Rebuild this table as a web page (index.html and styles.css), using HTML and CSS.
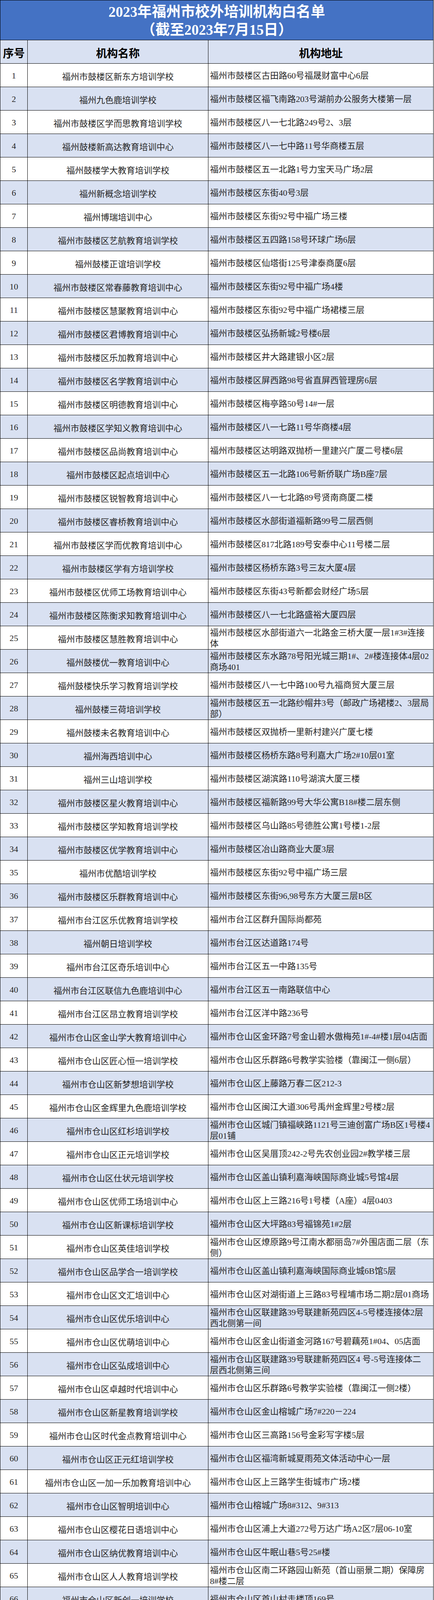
FILE: index.html
```html
<!DOCTYPE html>
<html lang="zh-CN">
<head>
<meta charset="utf-8">
<title>2023年福州市校外培训机构白名单</title>
<link rel="stylesheet" href="styles.css">
</head>
<body>
<div class="sheet">
  <div class="title">
    <div>2023年福州市校外培训机构白名单</div>
    <div>（截至2023年7月15日）</div>
  </div>
  <div class="row head"><div class="num">序号</div><div class="name">机构名称</div><div class="addr">机构地址</div></div>
  <div class="row"><div class="num">1</div><div class="name">福州市鼓楼区新东方培训学校</div><div class="addr">福州市鼓楼区古田路60号福晟财富中心6层</div></div>
  <div class="row alt"><div class="num">2</div><div class="name">福州九色鹿培训学校</div><div class="addr">福州市鼓楼区福飞南路203号湖前办公服务大楼第一层</div></div>
  <div class="row"><div class="num">3</div><div class="name">福州市鼓楼区学而思教育培训学校</div><div class="addr">福州市鼓楼区八一七北路249号2、3层</div></div>
  <div class="row alt"><div class="num">4</div><div class="name">福州鼓楼新高达教育培训中心</div><div class="addr">福州市鼓楼区八一七中路11号华商楼五层</div></div>
  <div class="row"><div class="num">5</div><div class="name">福州鼓楼学大教育培训学校</div><div class="addr">福州市鼓楼区五一北路1号力宝天马广场2层</div></div>
  <div class="row alt"><div class="num">6</div><div class="name">福州新概念培训学校</div><div class="addr">福州市鼓楼区东街40号3层</div></div>
  <div class="row"><div class="num">7</div><div class="name">福州博瑞培训中心</div><div class="addr">福州市鼓楼区东街92号中福广场三楼</div></div>
  <div class="row alt"><div class="num">8</div><div class="name">福州市鼓楼区艺航教育培训学校</div><div class="addr">福州市鼓楼区五四路158号环球广场6层</div></div>
  <div class="row"><div class="num">9</div><div class="name">福州鼓楼正谊培训学校</div><div class="addr">福州市鼓楼区仙塔街125号津泰商厦6层</div></div>
  <div class="row alt"><div class="num">10</div><div class="name">福州市鼓楼区常春藤教育培训中心</div><div class="addr">福州市鼓楼区东街92号中福广场4楼</div></div>
  <div class="row"><div class="num">11</div><div class="name">福州市鼓楼区慧聚教育培训中心</div><div class="addr">福州市鼓楼区东街92号中福广场裙楼三层</div></div>
  <div class="row alt"><div class="num">12</div><div class="name">福州市鼓楼区君博教育培训中心</div><div class="addr">福州市鼓楼区弘扬新城2号楼6层</div></div>
  <div class="row"><div class="num">13</div><div class="name">福州市鼓楼区乐加教育培训中心</div><div class="addr">福州市鼓楼区井大路建银小区2层</div></div>
  <div class="row alt"><div class="num">14</div><div class="name">福州市鼓楼区名学教育培训中心</div><div class="addr">福州市鼓楼区屏西路98号省直屏西管理房6层</div></div>
  <div class="row"><div class="num">15</div><div class="name">福州市鼓楼区明德教育培训中心</div><div class="addr">福州市鼓楼区梅亭路50号14#一层</div></div>
  <div class="row alt"><div class="num">16</div><div class="name">福州市鼓楼区学知义教育培训中心</div><div class="addr">福州市鼓楼区八一七路11号华商楼4层</div></div>
  <div class="row"><div class="num">17</div><div class="name">福州市鼓楼区品尚教育培训中心</div><div class="addr">福州市鼓楼区达明路双抛桥一里建兴广厦二号楼6层</div></div>
  <div class="row alt"><div class="num">18</div><div class="name">福州市鼓楼区起点培训中心</div><div class="addr">福州市鼓楼区五一北路106号新侨联广场B座7层</div></div>
  <div class="row"><div class="num">19</div><div class="name">福州市鼓楼区锐智教育培训中心</div><div class="addr">福州市鼓楼区八一七北路89号贤南商厦二楼</div></div>
  <div class="row alt"><div class="num">20</div><div class="name">福州市鼓楼区睿桥教育培训中心</div><div class="addr">福州市鼓楼区水部街道福新路99号二层西侧</div></div>
  <div class="row"><div class="num">21</div><div class="name">福州市鼓楼区学而优教育培训中心</div><div class="addr">福州市鼓楼区817北路189号安泰中心11号楼二层</div></div>
  <div class="row alt"><div class="num">22</div><div class="name">福州市鼓楼区学有方培训学校</div><div class="addr">福州市鼓楼区杨桥东路3号三友大厦4层</div></div>
  <div class="row"><div class="num">23</div><div class="name">福州市鼓楼区优师工场教育培训中心</div><div class="addr">福州市鼓楼区东街43号新都会财经广场5层</div></div>
  <div class="row alt"><div class="num">24</div><div class="name">福州市鼓楼区陈衡求知教育培训中心</div><div class="addr">福州市鼓楼区八一七北路盛裕大厦四层</div></div>
  <div class="row"><div class="num">25</div><div class="name">福州市鼓楼区慧胜教育培训中心</div><div class="addr">福州市鼓楼区水部街道六一北路金三桥大厦一层1#3#连接<br>体</div></div>
  <div class="row alt"><div class="num">26</div><div class="name">福州鼓楼优一教育培训中心</div><div class="addr">福州市鼓楼区东水路78号阳光城三期1#、2#楼连接体4层02<br>商场401</div></div>
  <div class="row"><div class="num">27</div><div class="name">福州鼓楼快乐学习教育培训学校</div><div class="addr">福州市鼓楼区八一七中路100号九福商贸大厦三层</div></div>
  <div class="row alt"><div class="num">28</div><div class="name">福州鼓楼三荷培训学校</div><div class="addr">福州市鼓楼区五一北路纱帽井3号（邮政广场裙楼2、3层局<br>部）</div></div>
  <div class="row"><div class="num">29</div><div class="name">福州鼓楼未名教育培训中心</div><div class="addr">福州市鼓楼区双抛桥一里新村建兴广厦七楼</div></div>
  <div class="row alt"><div class="num">30</div><div class="name">福州海西培训中心</div><div class="addr">福州市鼓楼区杨桥东路8号利嘉大广场2#10层01室</div></div>
  <div class="row"><div class="num">31</div><div class="name">福州三山培训学校</div><div class="addr">福州市鼓楼区湖滨路110号湖滨大厦三楼</div></div>
  <div class="row alt"><div class="num">32</div><div class="name">福州市鼓楼区星火教育培训中心</div><div class="addr">福州市鼓楼区福新路99号大华公寓B18#楼二层东侧</div></div>
  <div class="row"><div class="num">33</div><div class="name">福州市鼓楼区学知教育培训学校</div><div class="addr">福州市鼓楼区乌山路85号德胜公寓1号楼1-2层</div></div>
  <div class="row alt"><div class="num">34</div><div class="name">福州市鼓楼区优学教育培训中心</div><div class="addr">福州市鼓楼区冶山路商业大厦3层</div></div>
  <div class="row"><div class="num">35</div><div class="name">福州市优酷培训学校</div><div class="addr">福州市鼓楼区东街92号中福广场三层</div></div>
  <div class="row alt"><div class="num">36</div><div class="name">福州市鼓楼区乐群教育培训中心</div><div class="addr">福州市鼓楼区东街96,98号东方大厦三层B区</div></div>
  <div class="row"><div class="num">37</div><div class="name">福州市台江区乐优教育培训学校</div><div class="addr">福州市台江区群升国际尚都苑</div></div>
  <div class="row alt"><div class="num">38</div><div class="name">福州朝日培训学校</div><div class="addr">福州市台江区达道路174号</div></div>
  <div class="row"><div class="num">39</div><div class="name">福州市台江区奇乐培训中心</div><div class="addr">福州市台江区五一中路135号</div></div>
  <div class="row alt"><div class="num">40</div><div class="name">福州市台江区联信九色鹿培训中心</div><div class="addr">福州市台江区五一南路联信中心</div></div>
  <div class="row"><div class="num">41</div><div class="name">福州市台江区昂立教育培训学校</div><div class="addr">福州市台江区洋中路236号</div></div>
  <div class="row alt"><div class="num">42</div><div class="name">福州市仓山区金山学大教育培训中心</div><div class="addr">福州市仓山区金环路7号金山碧水傲梅苑1#-4#楼1层04店面</div></div>
  <div class="row"><div class="num">43</div><div class="name">福州市仓山区匠心恒一培训学校</div><div class="addr">福州市仓山区乐群路6号教学实验楼（靠闽江一侧6层）</div></div>
  <div class="row alt"><div class="num">44</div><div class="name">福州市仓山区新梦想培训学校</div><div class="addr">福州市仓山区上藤路万春二区212-3</div></div>
  <div class="row"><div class="num">45</div><div class="name">福州市仓山区金辉里九色鹿培训学校</div><div class="addr">福州市仓山区闽江大道306号禹州金辉里2号楼2层</div></div>
  <div class="row alt"><div class="num">46</div><div class="name">福州市仓山区红杉培训学校</div><div class="addr">福州市仓山区城门镇福峡路1121号三迪创富广场B区1号楼4<br>层01铺</div></div>
  <div class="row"><div class="num">47</div><div class="name">福州市仓山区正元培训学校</div><div class="addr">福州市仓山区吴厝顶242-2号先农创业园2#教学楼三层</div></div>
  <div class="row alt"><div class="num">48</div><div class="name">福州市仓山区仕状元培训学校</div><div class="addr">福州市仓山区盖山镇利嘉海峡国际商业城5号馆4层</div></div>
  <div class="row"><div class="num">49</div><div class="name">福州市仓山区优师工场培训中心</div><div class="addr">福州市仓山区上三路216号1号楼（A座）4层0403</div></div>
  <div class="row alt"><div class="num">50</div><div class="name">福州市仓山区新课标培训学校</div><div class="addr">福州市仓山区大坪路83号福锦苑1#2层</div></div>
  <div class="row"><div class="num">51</div><div class="name">福州市仓山区英佳培训学校</div><div class="addr">福州市仓山区燎原路9号江南水都丽岛7#外围店面二层（东<br>侧）</div></div>
  <div class="row alt"><div class="num">52</div><div class="name">福州市仓山区品学合一培训学校</div><div class="addr">福州市仓山区盖山镇利嘉海峡国际商业城6B馆5层</div></div>
  <div class="row"><div class="num">53</div><div class="name">福州市仓山区文汇培训中心</div><div class="addr">福州市仓山区对湖街道上三路83号程埔市场二期2层01商场</div></div>
  <div class="row alt"><div class="num">54</div><div class="name">福州市仓山区优乐培训中心</div><div class="addr">福州市仓山区联建路39号联建新苑四区4-5号楼连接体2层<br>西北侧第一间</div></div>
  <div class="row"><div class="num">55</div><div class="name">福州市仓山区优萌培训中心</div><div class="addr">福州市仓山区金山街道金河路167号碧藕苑1#04、05店面</div></div>
  <div class="row alt"><div class="num">56</div><div class="name">福州市仓山区弘成培训中心</div><div class="addr">福州市仓山区联建路39号联建新苑四区4 号-5号连接体二<br>层西北侧第三间</div></div>
  <div class="row"><div class="num">57</div><div class="name">福州市仓山区卓越时代培训中心</div><div class="addr">福州市仓山区乐群路6号教学实验楼（靠闽江一侧2楼）</div></div>
  <div class="row alt"><div class="num">58</div><div class="name">福州市仓山区新星教育培训学校</div><div class="addr">福州市仓山区金山榕城广场7#220－224</div></div>
  <div class="row"><div class="num">59</div><div class="name">福州市仓山区时代金点教育培训中心</div><div class="addr">福州市仓山区三高路156号金彩写字楼5层</div></div>
  <div class="row alt"><div class="num">60</div><div class="name">福州市仓山区正元红培训学校</div><div class="addr">福州市仓山区福湾新城夏雨苑文体活动中心一层</div></div>
  <div class="row"><div class="num">61</div><div class="name">福州市仓山区一加一乐加教育培训中心</div><div class="addr">福州市仓山区上三路学生街城市广场2楼</div></div>
  <div class="row alt"><div class="num">62</div><div class="name">福州市仓山区智明培训中心</div><div class="addr">福州市仓山榕城广场8#312、9#313</div></div>
  <div class="row"><div class="num">63</div><div class="name">福州市仓山区樱花日语培训中心</div><div class="addr">福州市仓山区浦上大道272号万达广场A2区7层06-10室</div></div>
  <div class="row alt"><div class="num">64</div><div class="name">福州市仓山区纳优教育培训中心</div><div class="addr">福州市仓山区牛眠山巷5号25#楼</div></div>
  <div class="row"><div class="num">65</div><div class="name">福州市仓山区人人教育培训学校</div><div class="addr">福州市仓山区南二环路园山新苑（首山丽景二期）保障房<br>8#楼二层</div></div>
  <div class="row alt"><div class="num">66</div><div class="name">福州市仓山区新创一培训学校</div><div class="addr">福州市仓山区首山村走楼顶169号</div></div>
  <div class="row"><div class="num">67</div><div class="name">福州市仓山区闽教培训学校</div><div class="addr">福州市仓山区乐群路6号教学实验楼301-303（靠闽江一<br>侧）</div></div>
  <div class="row alt"><div class="num">68</div><div class="name">福州市晋安区稻田九色鹿培训中心</div><div class="addr">福州市晋安区南平东路98号稻田创业小镇A7号达成楼7402<br>、7403</div></div>
  <div class="row"><div class="num">69</div><div class="name">福州市晋安区塔头九色鹿培训中心</div><div class="addr">福州市晋安区塔头路145号（原福州市三八路七号）1号楼3<br>层整层</div></div>
  <div class="row alt"><div class="num">70</div><div class="name">福州市晋安区连潘九色鹿培训中心</div><div class="addr">福州市晋安区象园街道国货东路331号英泰商业中心5#楼<br>01.02.03店面。</div></div>
  <div class="row"><div class="num">71</div><div class="name">福州市马尾区启航培训学校</div><div class="addr">福州市马尾区罗建路46号罗星社区顺兴综合楼</div></div>
  <div class="row alt"><div class="num">72</div><div class="name">福州市马尾区明智培训中心</div><div class="addr">福州市马尾区罗星街道青洲路66号渔业大厦1A1B、15层</div></div>
  <div class="row"><div class="num">73</div><div class="name">福州市马尾区新起点教育培训中心</div><div class="addr">福州市马尾区罗星路西北侧中环广场5层A区</div></div>
  <div class="row alt"><div class="num">74</div><div class="name">福州市马尾区九色鹿培训学校</div><div class="addr">福州市马尾区罗星街道沿山东路227号聚英花园三层301-<br>307室</div></div>
  <div class="row"><div class="num">75</div><div class="name">福州市马尾区博唯教育培训中心</div><div class="addr">福州市马尾区儒江西路60号中建海峡B座8楼01、05室</div></div>
  <div class="row alt"><div class="num">76</div><div class="name">福州市马尾区优越教育培训学校</div><div class="addr">福州市马尾区中垱路快安科技园19号3#2层</div></div>
  <div class="row"><div class="num">77</div><div class="name">福州市马尾区花田昂立教育培训学校</div><div class="addr">福州市马尾区君竹路37号海西提10#2层01店面</div></div>
  <div class="row alt"><div class="num">78</div><div class="name">福州市长乐区新概念英语培训中心</div><div class="addr">福州市长乐区吴航街道盛昌花园综合楼二层3号店</div></div>
  <div class="row"><div class="num">79</div><div class="name">福州市长乐区笃慧教育培训学校</div><div class="addr">福州市长乐区航城街道吉祥花园1座3层</div></div>
  <div class="row alt"><div class="num">80</div><div class="name">福州市长乐区笃慧教育培训学校国豪分支点</div><div class="addr">福州市长乐区吴航街道国豪帝景二层</div></div>
  <div class="row"><div class="num">81</div><div class="name">福州市长乐区创新文化艺术培训中心</div><div class="addr">福州市长乐区吴航街道西洋中路247号东方御苑2层</div></div>
  <div class="row alt"><div class="num">82</div><div class="name">福州市长乐区正思教育培训学校</div><div class="addr">福州市长乐区吴航街道郑和小区连接体商场2号</div></div>
  <div class="row"><div class="num">83</div><div class="name">福州市长乐区敏学教育培训中心</div><div class="addr">福州市长乐区吴航街道郑和东路59-25二层商场</div></div>
  <div class="row alt"><div class="num">84</div><div class="name">福州市长乐区鼎尖教育培训学校</div><div class="addr">福州市长乐区郑和东路102号燃料公司综合大楼二层</div></div>
  <div class="row"><div class="num">85</div><div class="name">福州市长乐区三思教育培训中心</div><div class="addr">福州市长乐区吴航街道郑和中路1号十洋国际商场7层</div></div>
  <div class="row alt"><div class="num">86</div><div class="name">福州市长乐区航光教育培训中心</div><div class="addr">福州市长乐区朝阳中路166号</div></div>
  <div class="row"><div class="num">87</div><div class="name">福州市长乐区民生培训学校</div><div class="addr">福州市长乐区西洋南路193号</div></div>
  <div class="row alt"><div class="num">88</div><div class="name">福清市典点星教育培训学校</div><div class="addr">福州市福清市大圣路前面山片区改造安置区7#2-5层</div></div>
  <div class="row"><div class="num">89</div><div class="name">福清市读书郎文化培训中心</div><div class="addr">福州市福清市音西街道万达广场A1座写字楼505、506、507<br>室</div></div>
  <div class="row alt"><div class="num">90</div><div class="name">福清市一诺文化培训中心</div><div class="addr">福州市福清市国际商展中心4楼</div></div>
  <div class="row"><div class="num">91</div><div class="name">福清市乐优教育培训学校</div><div class="addr">福州市福清市玉屏街道向高街明中、明华楼夹层01-10店面</div></div>
  <div class="row alt"><div class="num">92</div><div class="name">福清市恩典教育培训中心</div><div class="addr">福州市福清市玉屏街道向高街明商徽二层</div></div>
  <div class="row"><div class="num">93</div><div class="name">福清市远英教育培训中心有限公司</div><div class="addr">福州市福清市音西街道音西村洋埔村中联天御一期16#楼4<br>层</div></div>
  <div class="row alt"><div class="num">94</div><div class="name">福清市心苹教育培训中心</div><div class="addr">福州市福清市音西街道国际华城A13号楼205店面</div></div>
  <div class="row"><div class="num">95</div><div class="name">闽侯县昂立教育培训中心</div><div class="addr">福州市闽侯县上街邱阳东路8号2幢上街红峰社区文化综合<br>活动中心</div></div>
  <div class="row alt"><div class="num">96</div><div class="name">闽侯县胜大教育培训学校</div><div class="addr">福州市闽侯县上街镇中美村2号安置地12#综合楼二层北侧</div></div>
  <div class="row"><div class="num">97</div><div class="name">闽侯县乐学林培训学校</div><div class="addr">福州市闽侯县甘蔗街道县石山中大道118号新城丽景A区2号<br>楼二层213</div></div>
  <div class="row alt"><div class="num">98</div><div class="name">闽侯县九色鹿培训中心</div><div class="addr">福州市闽侯县上街镇邱阳东路8号2幢,3幢</div></div>
  <div class="row"><div class="num">99</div><div class="name">闽侯县骐丽三牧培训中心</div><div class="addr">福州市闽侯县上街镇邱阳东路8号汇锋广场3号楼2层</div></div>
  <div class="row alt"><div class="num">100</div><div class="name">闽侯县学得到培训中心</div><div class="addr">福州市闽侯县青口镇青口建筑材料供应有限公司（青口建<br>材市场）富竹大厦2层</div></div>
  <div class="row"><div class="num">101</div><div class="name">闽侯县吐故纳新培训中心</div><div class="addr">福州市闽侯县南通镇芹洲路6号（海峡鑫天地）瑞特戴斯酒<br>店二楼楼梯西侧办公区</div></div>
  <div class="row alt"><div class="num">102</div><div class="name">连江县昂立外语培训班</div><div class="addr">福州市连江县凤城镇文山南路218号温馨花园1#楼4层商<br>场，B至1F轴交3至4轴</div></div>
  <div class="row"><div class="num">103</div><div class="name">连江县学知教育培训中心</div><div class="addr">福州市连江县凤城镇金安东路5号鼎森中央公园一区A3-A5<br>幢2层</div></div>
  <div class="row alt"><div class="num">104</div><div class="name">连江县吉米怀英语培训中心</div><div class="addr">福州市连江县凤城镇金安东路2号格林威治二区5幢二层商<br>业D区</div></div>
  <div class="row"><div class="num">105</div><div class="name">连江县吉米怀英语培训中心太一教学点</div><div class="addr">福州市连江县凤城镇文山北路太一新天地3#7店</div></div>
  <div class="row alt"><div class="num">106</div><div class="name">连江县新星教育培训中心</div><div class="addr">福州市连江县凤城镇文山北路7号金凤名都3#楼二层</div></div>
  <div class="row"><div class="num">107</div><div class="name">连江县衡乙教育培训学校有限公司</div><div class="addr">福州市连江县潘渡乡沿江大道1号贵安新天地福州百姓长廊<br>勉斋书院</div></div>
  <div class="row alt"><div class="num">108</div><div class="name">连江县云儒文化教育培训学校</div><div class="addr">福州市连江县凤城镇马祖东路3号碧水龙城3幢二层-三层</div></div>
  <div class="row"><div class="num">109</div><div class="name">闽清县育才培训学校</div><div class="addr">福州市闽清县梅城镇城大路村综合楼(大路村7号)</div></div>
  <div class="row alt"><div class="num">110</div><div class="name">闽清县上德培训学校</div><div class="addr">福州市闽清县雄江镇梅雄村207-1号</div></div>
  <div class="row"><div class="num">111</div><div class="name">罗源县佳未来教育培训中心</div><div class="addr">福州市罗源县滨海新城风情商业街D 1-13、14、15</div></div>
  <div class="row alt"><div class="num">112</div><div class="name">永泰县新高博培训学校</div><div class="addr">福州市永泰县樟城镇北门路72-1号</div></div>
  <div class="row"><div class="num">113</div><div class="name">永泰县新永阳培训学校</div><div class="addr">福州市永泰县城峰镇动车站广场店面</div></div>
  <div class="row alt"><div class="num">114</div><div class="name">永泰县毓才培训学校</div><div class="addr">福州市永泰县樟城镇北门路76号</div></div>
  <div class="row"><div class="num">115</div><div class="name">福州高新区高宏培训学校</div><div class="addr">福州市高新区南屿镇乌龙江南大道168号福州诚达电子高新<br>技术有限公司综合楼一至二层</div></div>
  <div class="row alt"><div class="num">116</div><div class="name">福州高新区昂立教育培训中心</div><div class="addr">福州市高新区南屿镇旗山路10号正祥林语墅4-12#、4-13#<br>集中式商业网点13、15、16店面</div></div>
  <div class="row"><div class="num">117</div><div class="name">福州高新区好升学培训学校</div><div class="addr">福州市高新区南屿镇乌龙江南大道79号信通国际中心4#3-4<br>层</div></div>
  <div class="row alt"><div class="num">118</div><div class="name">福州高新区微铭教育培训学校</div><div class="addr">福州市高新区南屿镇后山村中元艺术大厦3号楼二层东侧</div></div>
  <div class="row"><div class="num">119</div><div class="name">福州高新区易考培训中心</div><div class="addr">福州市高新区南屿镇信通国际中心B地块4#楼5层</div></div>
  <div class="row alt"><div class="num">120</div><div class="name">福州高新区乐思培训中心</div><div class="addr">福州市高新区南屿镇信通国际中心B地块4#楼6层</div></div>
  <div class="row"><div class="num">121</div><div class="name">福州高新区优教酷学培训学校</div><div class="addr">福州市高新区南屿镇旗山路1号旗山文城商业3#楼一层107-<br>112、114-120店面</div></div>
  <div class="row alt"><div class="num">122</div><div class="name">福州市鼓楼区南风艺术培训中心有限公司</div><div class="addr">福建省福州市鼓楼区鼓西街道湖滨路66号中福西湖花园1#<br>楼A区三层</div></div>
  <div class="row"><div class="num">123</div><div class="name">福州市鼓楼区沐光里艺术培训中心有限公司</div><div class="addr">福建省福州市鼓楼区温泉街道温泉公园路53号花园吕3#楼3<br>层01商场</div></div>
  <div class="row alt"><div class="num">124</div><div class="name">福州市鼓楼区新东方艺术培训学校有限公司</div><div class="addr">福建省福州市鼓楼区华大街道北二环中路18号恒力博纳广<br>场（南区)连接体一层12b商业</div></div>
  <div class="row"><div class="num">125</div><div class="name">福州市鼓楼区阳子艺术培训中心有限公司</div><div class="addr">福建省福州市鼓楼区赛月亭巷35号公正新苑1号楼2层东侧</div></div>
  <div class="row alt"><div class="num">126</div><div class="name">福州市鼓楼区舞当家艺术培训中心有限公司</div><div class="addr">福建省福州市鼓楼区水部街道福新路239号吉翔双子星大厦<br>1#-2#楼连体02商场四层01区</div></div>
  <div class="row"><div class="num">127</div><div class="name">福州市仓山区新东方艺术培训学校有限公司</div><div class="addr">福建省福州市仓山区仓前街道石岩路33号欣隆盛世<span class="fw">“</span>B地块<br><span class="fw">”</span>（三期）B2#楼1层13-17店面</div></div>
  <div class="row alt"><div class="num">128</div><div class="name">福州市鼓楼区晨辉时代体育培训有限责任公司</div><div class="addr">福州市鼓楼区铜盘路261号凤起楼</div></div>
  <div class="row"><div class="num">129</div><div class="name">福州仓山区沃动体育培训有限公司</div><div class="addr">福建省福州市仓山区飞凤山奥体公园2#配套服务建筑一层<br>07号</div></div>
</div>
</body>
</html>
```

FILE: styles.css
```css
html, body {
  margin: 0;
  padding: 0;
  background: #ffffff;
}

.sheet {
  width: 1111px;
  box-sizing: border-box;
  border-top: 1px solid #000;
  border-left: 1px solid #000;
  border-right: 1px solid #000;
  font-family: "Liberation Serif", "Noto Sans CJK SC", serif;
  color: #262626;
}

.title {
  height: 102px;
  box-sizing: border-box;
  border-bottom: 1px solid #000;
  background: #4472c4;
  color: #ffffff;
  display: flex;
  flex-direction: column;
  align-items: center;
  justify-content: center;
  padding-top: 5px;
  font-size: 37px;
  line-height: 46px;
  font-weight: 700;
  white-space: nowrap;
}

.row {
  display: grid;
  grid-template-columns: 70px 463px 576px;
  height: 60px;
  box-sizing: border-box;
  border-bottom: 1px solid #000;
  background: #ffffff;
  font-size: 22px;
  line-height: 28px;
}

.row.alt,
.row.head {
  background: #d9e1f2;
}

.num,
.name,
.addr {
  display: flex;
  align-items: center;
  box-sizing: border-box;
  padding-top: 2px;
  overflow: hidden;
}

.num {
  justify-content: center;
  border-right: 1px solid #000;
  font-family: "Liberation Serif", "Noto Sans CJK SC", serif;
}

.name {
  justify-content: center;
  border-right: 1px solid #000;
  font-family: "Noto Sans CJK SC", sans-serif;
  white-space: nowrap;
}

.addr {
  justify-content: flex-start;
  padding-left: 4px;
  padding-right: 2px;
  font-family: "Liberation Serif", "Noto Sans CJK SC", sans-serif;
  white-space: nowrap;
}

.fw {
  font-family: "Noto Sans CJK SC", sans-serif;
}

.row.head .num,
.row.head .name,
.row.head .addr {
  font-family: "Noto Sans CJK SC", sans-serif;
  font-size: 28px;
  font-weight: 700;
  color: #000;
  justify-content: center;
  padding-top: 4px;
  padding-left: 0;
  padding-right: 0;
}
```
